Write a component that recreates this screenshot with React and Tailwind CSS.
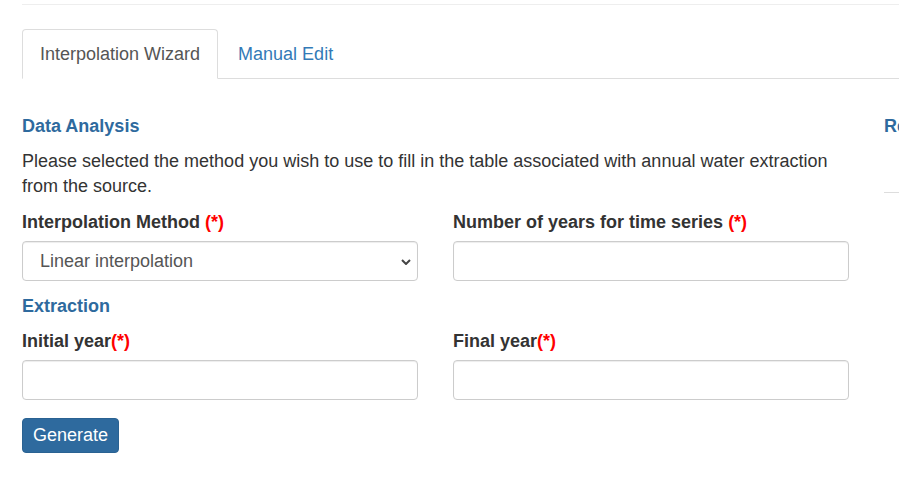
const Req = ({ space = true }) => (
  <span className="text-[#ff0000]">{space ? ' ' : ''}(*)</span>
);

const Field = ({ label, space, children }) => (
  <div>
    <label className="block font-bold text-[#333] mb-[6px]">
      {label}
      <Req space={space} />
    </label>
    {children}
  </div>
);

const inputCls =
  'block w-full h-[40px] border border-[#ccc] rounded-[4px] bg-white px-[17px] text-[18px] text-[#555] shadow-[inset_0_1px_1px_rgba(0,0,0,0.075)] outline-none';

const App = () => {
  const tabs = ['Interpolation Wizard', 'Manual Edit'];
  const active = 0;

  return (
    <div
      className="w-[899px] h-[491px] overflow-hidden bg-white text-[18px] leading-[25px] text-[#333]"
      style={{ fontFamily: '"Liberation Sans", Arial, sans-serif' }}
    >
      <div className="pl-[22px] pt-[4px] w-[1100px]">
        {/* top rule */}
        <div className="border-t border-[#eee]" />

        {/* Tabs */}
        <nav className="flex mt-[24px] border-b border-[#ddd]">
          {tabs.map((t, i) => (
            <div
              key={t}
              className={
                i === active
                  ? 'mr-[2px] -mb-px px-[17px] pt-[12px] pb-[11px] border border-[#ddd] border-b-white rounded-t-[4px] bg-white text-[#555]'
                  : 'mr-[2px] -mb-px px-[17px] pt-[12px] pb-[11px] border border-transparent text-[#337ab7]'
              }
            >
              {t}
            </div>
          ))}
        </nav>

        {/* Content */}
        <div className="flex gap-[35px] mt-[35px]">
          <div className="w-[827px] shrink-0">
            <h4 className="font-bold text-[#2e6a9e]">Data Analysis</h4>
            <p className="mt-[10px]">
              Please selected the method you wish to use to fill in the table associated with annual water extraction
              from the source.
            </p>

            <div className="grid grid-cols-[396px_396px] gap-x-[35px] mt-[11px]">
              <Field label="Interpolation Method">
                <div className="relative">
                  <select className={inputCls + ' appearance-none'} defaultValue="linear">
                    <option value="linear">Linear interpolation</option>
                  </select>
                  <svg
                    className="absolute right-[7px] top-[18px] pointer-events-none"
                    width="10"
                    height="6"
                    viewBox="0 0 10 6"
                  >
                    <path d="M1 1 L5 5 L9 1" fill="none" stroke="#444" strokeWidth="2" />
                  </svg>
                </div>
              </Field>
              <Field label="Number of years for time series">
                <input className={inputCls} />
              </Field>
            </div>

            <h4 className="font-bold text-[#2e6a9e] mt-[13px]">Extraction</h4>

            <div className="grid grid-cols-[396px_396px] gap-x-[35px] mt-[10px]">
              <Field label="Initial year" space={false}>
                <input className={inputCls} />
              </Field>
              <Field label="Final year" space={false}>
                <input className={inputCls} />
              </Field>
            </div>

            <button className="mt-[18px] px-[10px] py-[4px] border border-[#2a6292] rounded-[4px] bg-[#2e6a9e] text-white">
              Generate
            </button>
          </div>

          {/* Side column */}
          <div className="w-[200px] shrink-0">
            <h4 className="font-bold text-[#2e6a9e]">Results</h4>
            <div className="mt-[53px] border-t border-[#ddd]" />
          </div>
        </div>
      </div>
    </div>
  );
};

export default App;
